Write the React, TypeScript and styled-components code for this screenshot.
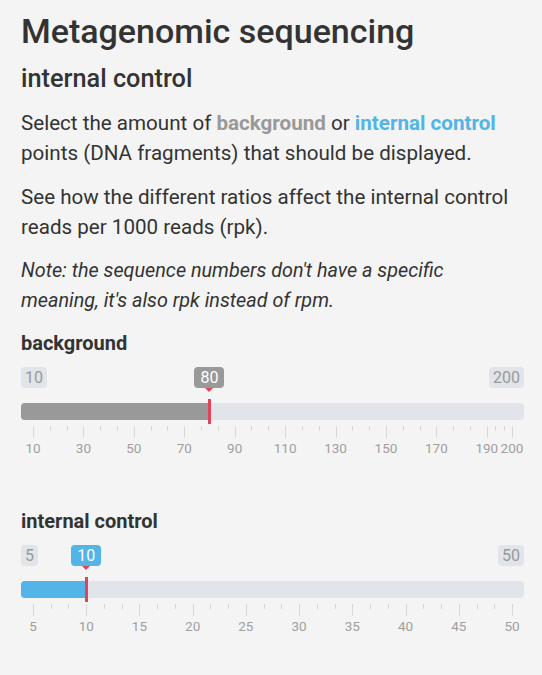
import React from 'react';
import styled, { createGlobalStyle } from 'styled-components';

const palette = {
  page: '#f4f4f4',
  text: '#333333',
  grey: '#999999',
  blue: '#52b4e7',
  red: '#e3435a',
  track: '#e1e4e9',
  tick: '#d8d8d8',
  tickText: '#9f9f9f',
};

const GlobalStyle = createGlobalStyle`
  html, body {
    margin: 0;
    background: ${palette.page};
  }
  body {
    font-family: Roboto, "Liberation Sans", sans-serif;
    color: ${palette.text};
  }
`;

const Page = styled.main`
  padding: 10px 18px 20px 21px;
`;

const Title = styled.h1`
  margin: 0;
  font-size: 34px;
  font-weight: 500;
  line-height: 42px;
`;

const Subtitle = styled.h2`
  margin: 12px 0 0;
  font-size: 25.3px;
  font-weight: 500;
  line-height: 30px;
`;

const Text = styled.p<{ $italic?: boolean }>`
  margin: 14px 0 0;
  font-size: ${(p) => (p.$italic ? '19.8px' : '20.6px')};
  line-height: 30px;
  font-style: ${(p) => (p.$italic ? 'italic' : 'normal')};
`;

const Highlight = styled.span<{ $color: string }>`
  color: ${(p) => p.$color};
  font-weight: 700;
`;

const SliderBlock = styled.section<{ $first?: boolean }>`
  margin-top: ${(p) => (p.$first ? '15px' : '55px')};
`;

const SliderTitle = styled.h3`
  margin: 0;
  font-size: 20px;
  font-weight: 700;
  line-height: 24px;
`;

const Scale = styled.div`
  position: relative;
  margin-top: 12px;
`;

const EdgeRow = styled.div`
  display: flex;
  justify-content: space-between;
`;

const EdgeLabel = styled.span`
  background: ${palette.track};
  color: ${palette.grey};
  border-radius: 4px;
  padding: 0 4px;
  font-size: 16px;
  line-height: 21px;
`;

const Bubble = styled.span<{ $color: string }>`
  position: absolute;
  top: 0;
  transform: translateX(-50%);
  background: ${(p) => p.$color};
  color: #fff;
  border-radius: 4px;
  padding: 0 6px;
  font-size: 16px;
  line-height: 21px;

  &::after {
    content: '';
    position: absolute;
    left: 50%;
    top: 100%;
    margin-left: -4px;
    border: 4px solid transparent;
    border-top-color: ${palette.red};
  }
`;

const Track = styled.div`
  position: relative;
  margin-top: 15px;
  height: 17px;
  border-radius: 4px;
  background: ${palette.track};
`;

const Fill = styled.div<{ $color: string }>`
  height: 100%;
  border-radius: 4px 0 0 4px;
  background: ${(p) => p.$color};
`;

const Handle = styled.div`
  position: absolute;
  top: -4px;
  bottom: -4px;
  width: 3px;
  margin-left: -1px;
  background: ${palette.red};
`;

const Grid = styled.div`
  position: relative;
  height: 34px;
`;

const Tick = styled.i<{ $big?: boolean }>`
  position: absolute;
  top: 6px;
  width: 1px;
  height: ${(p) => (p.$big ? '12px' : '5px')};
  background: ${palette.tick};
`;

const TickLabel = styled.span`
  position: absolute;
  top: 20px;
  transform: translateX(-50%);
  font-size: 13.5px;
  line-height: 16px;
  color: ${palette.tickText};
  white-space: nowrap;
`;

type SliderProps = {
  title: string;
  min: number;
  max: number;
  value: number;
  color: string;
  marks: number[];
  first?: boolean;
};

const inset = 12;

const Slider = ({ title, min, max, value, color, marks, first }: SliderProps) => {
  const at = (v: number) => `calc(${inset}px + (100% - ${inset * 2}px) * ${(v - min) / (max - min)})`;

  const small: number[] = [];
  marks.slice(1).forEach((m, i) => {
    const prev = marks[i];
    small.push(prev + (m - prev) / 3, prev + ((m - prev) * 2) / 3);
  });

  return (
    <SliderBlock $first={first}>
      <SliderTitle>{title}</SliderTitle>
      <Scale>
        <EdgeRow>
          <EdgeLabel>{min}</EdgeLabel>
          <EdgeLabel>{max}</EdgeLabel>
        </EdgeRow>
        <Bubble $color={color} style={{ left: at(value) }}>
          {value}
        </Bubble>
        <Track>
          <Fill $color={color} style={{ width: at(value) }} />
          <Handle style={{ left: at(value) }} />
        </Track>
        <Grid>
          {small.map((v) => (
            <Tick key={`s${v}`} style={{ left: at(v) }} />
          ))}
          {marks.map((v) => (
            <React.Fragment key={v}>
              <Tick $big style={{ left: at(v) }} />
              <TickLabel style={{ left: at(v) }}>{v}</TickLabel>
            </React.Fragment>
          ))}
        </Grid>
      </Scale>
    </SliderBlock>
  );
};

const App = () => (
  <>
    <GlobalStyle />
    <Page>
      <Title>Metagenomic sequencing</Title>
      <Subtitle>internal control</Subtitle>
      <Text>
        Select the amount of <Highlight $color={palette.grey}>background</Highlight> or{' '}
        <Highlight $color={palette.blue}>internal control</Highlight> points (DNA fragments) that
        should be displayed.
      </Text>
      <Text>See how the different ratios affect the internal control reads per 1000 reads (rpk).</Text>
      <Text $italic>
        Note: the sequence numbers don't have a specific meaning, it's also rpk instead of rpm.
      </Text>
      <Slider
        first
        title="background"
        min={10}
        max={200}
        value={80}
        color={palette.grey}
        marks={[10, 30, 50, 70, 90, 110, 130, 150, 170, 190, 200]}
      />
      <Slider
        title="internal control"
        min={5}
        max={50}
        value={10}
        color={palette.blue}
        marks={[5, 10, 15, 20, 25, 30, 35, 40, 45, 50]}
      />
    </Page>
  </>
);

export default App;
